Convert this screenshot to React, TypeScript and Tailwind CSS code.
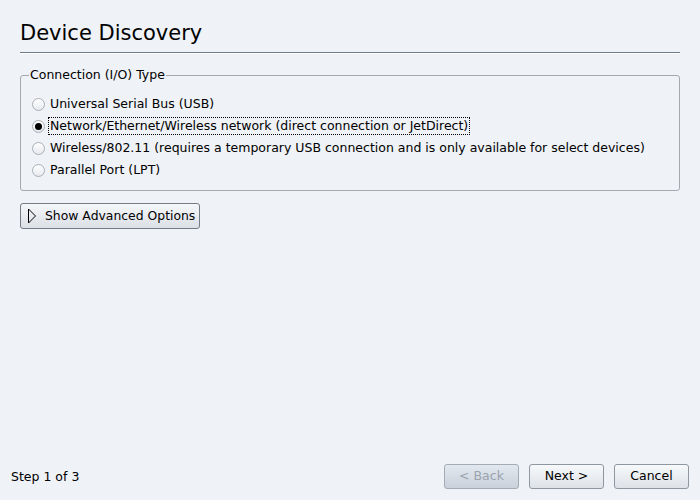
import React, { useState } from "react";

const options = [
  "Universal Serial Bus (USB)",
  "Network/Ethernet/Wireless network (direct connection or JetDirect)",
  "Wireless/802.11 (requires a temporary USB connection and is only available for select devices)",
  "Parallel Port (LPT)",
];

const Radio = ({ checked }: { checked: boolean }) => (
  <span className="w-[13px] h-[13px] rounded-full border border-[#a9b0b8] bg-gradient-to-b from-[#ffffff] to-[#e6e9ee] flex items-center justify-center shrink-0">
    {checked && <span className="w-[7px] h-[7px] rounded-full bg-black" />}
  </span>
);

const Btn = ({ label, disabled }: { label: string; disabled?: boolean }) => (
  <button
    className={`w-[75px] h-[25px] rounded-[3px] border text-[12.5px] flex items-center justify-center ${
      disabled
        ? "border-[#a3abb5] bg-gradient-to-b from-[#e3e8ef] to-[#c9d1db] text-[#9aa3ad]"
        : "border-[#8e969f] bg-gradient-to-b from-[#f7f9fb] to-[#dde2e8] text-black"
    }`}
  >
    {label}
  </button>
);

export default function App() {
  const [sel, setSel] = useState(1);
  return (
    <div
      className="w-[700px] h-[500px] bg-[#eff2f6] text-black flex flex-col"
      style={{ fontFamily: '"DejaVu Sans", sans-serif' }}
    >
      <div className="px-[20px] pt-[19px]">
        <h1 className="text-[21px] leading-[28px]">Device Discovery</h1>
        <div className="mt-[5px] h-[2px] bg-[#6e7c8a] border-b border-[#ffffff]" />
      </div>

      <fieldset className="mx-[20px] mt-[13px] border border-[#a2a9b1] rounded-[3px] px-[8px] pb-[9px] pt-[10px] h-[124px]">
        <legend className="text-[12.5px] px-[1px] leading-[16px]">Connection (I/O) Type</legend>
        <div className="flex flex-col pl-[3px]">
          {options.map((o, i) => (
            <label
              key={o}
              className="flex items-center gap-[3px] h-[22px] text-[12.5px] whitespace-nowrap cursor-pointer"
              onClick={() => setSel(i)}
            >
              <Radio checked={sel === i} />
              <span
                className={`px-[1px] leading-[16px] ${
                  i === 1 ? "border border-dotted border-black" : "border border-transparent"
                }`}
              >
                {o}
              </span>
            </label>
          ))}
        </div>
      </fieldset>

      <div className="px-[20px] mt-[12px]">
        <button className="h-[26px] w-[180px] rounded-[3px] border border-[#737b84] bg-gradient-to-b from-[#f5f7fa] to-[#dbe0e6] flex items-center text-[12.4px] whitespace-nowrap gap-[8px] px-[6px]">
          <svg width="10" height="16" viewBox="0 0 10 16" className="shrink-0">
            <path d="M1.5 1 L8.5 8 L1.5 15 Z" fill="none" stroke="#000" strokeWidth="1" />
          </svg>
          <span>Show Advanced Options</span>
        </button>
      </div>

      <div className="flex-1" />

      <div className="flex items-center pl-[11px] pr-[11px] pb-[11px]">
        <span className="text-[12.5px] mt-[1px]">Step 1 of 3</span>
        <div className="flex-1" />
        <div className="flex gap-[10px]">
          <Btn label="< Back" disabled />
          <Btn label="Next >" />
          <Btn label="Cancel" />
        </div>
      </div>
    </div>
  );
}
